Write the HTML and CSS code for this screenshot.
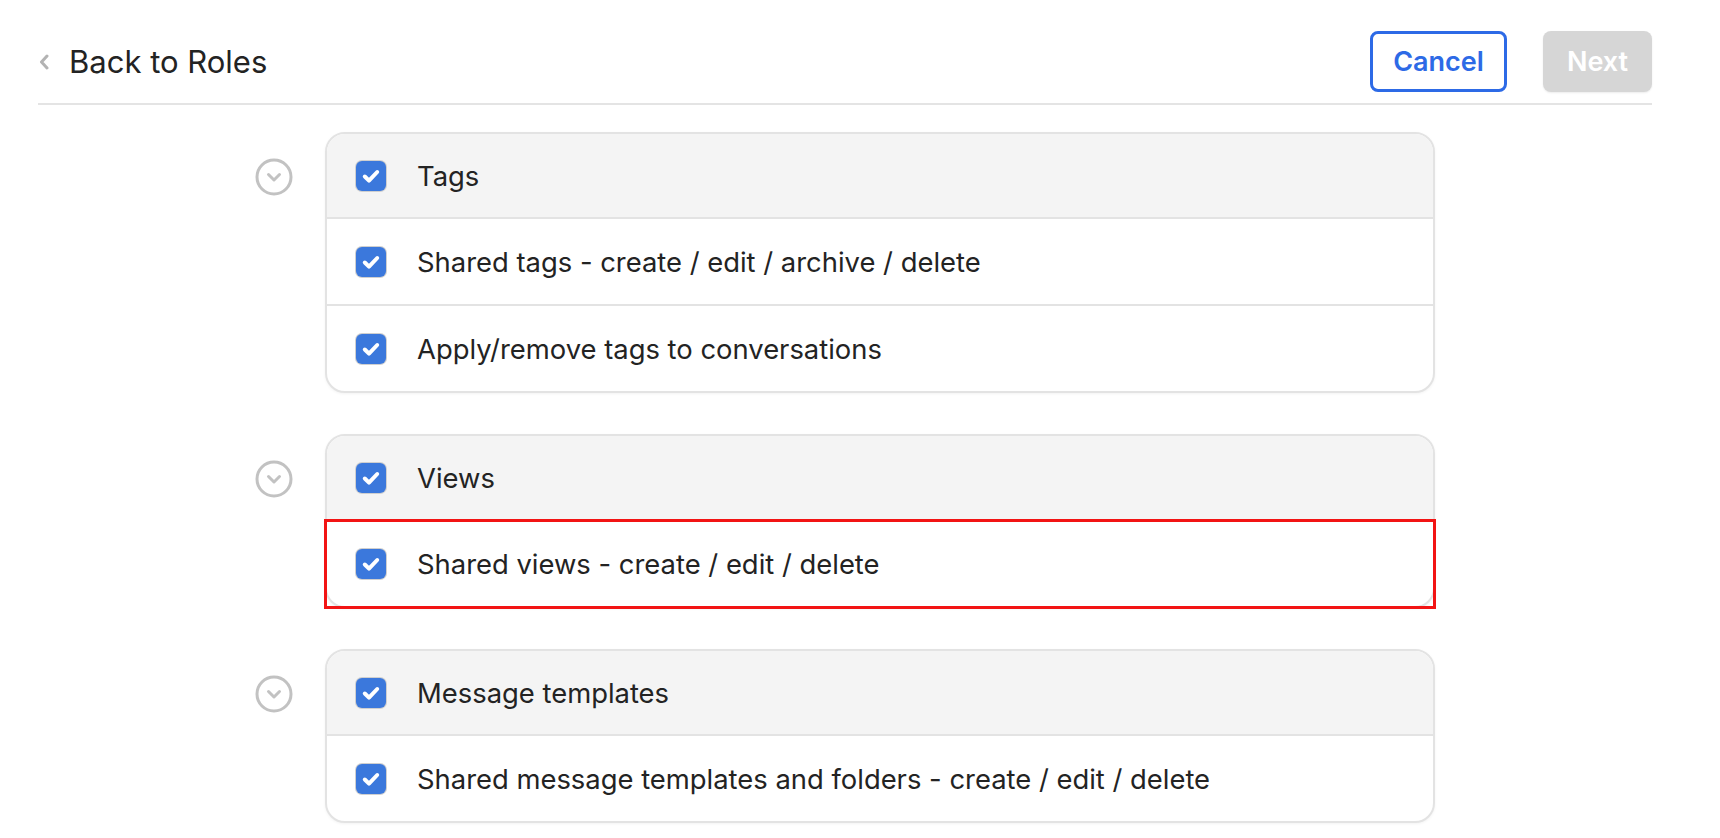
FILE: index.html
```html
<!DOCTYPE html>
<html>
<head>
<meta charset="utf-8">
<link rel="stylesheet" href="styles.css">
</head>
<body>
<header class="topbar">
  <a class="back">
    <svg class="back-icon" width="12" height="16" viewBox="0 0 12 16"><path d="M9 2 L3.5 8 L9 14" fill="none" stroke="#b3b3b3" stroke-width="3" stroke-linecap="round" stroke-linejoin="round"/></svg>
    <span class="back-text">Back to Roles</span>
  </a>
  <div class="actions">
    <button class="btn btn-cancel">Cancel</button>
    <button class="btn btn-next">Next</button>
  </div>
</header>
<main class="groups">
  <section class="group">
    <span class="toggle"><svg width="38" height="38" viewBox="0 0 38 38"><circle cx="19" cy="19" r="17" fill="none" stroke="#c2c2c2" stroke-width="3"/><path d="M13.5 16.5 L19 22 L24.5 16.5" fill="none" stroke="#c2c2c2" stroke-width="3" stroke-linecap="round" stroke-linejoin="round"/></svg></span>
    <div class="card">
      <div class="row head"><span class="cb"><svg viewBox="0 0 30 30"><path d="M8.8 15.5 L13 19.7 L21.2 11" fill="none" stroke="#fff" stroke-width="4" stroke-linecap="round" stroke-linejoin="round"/></svg></span><span class="label">Tags</span></div>
      <div class="row"><span class="cb"><svg viewBox="0 0 30 30"><path d="M8.8 15.5 L13 19.7 L21.2 11" fill="none" stroke="#fff" stroke-width="4" stroke-linecap="round" stroke-linejoin="round"/></svg></span><span class="label">Shared tags - create / edit / archive / delete</span></div>
      <div class="row last"><span class="cb"><svg viewBox="0 0 30 30"><path d="M8.8 15.5 L13 19.7 L21.2 11" fill="none" stroke="#fff" stroke-width="4" stroke-linecap="round" stroke-linejoin="round"/></svg></span><span class="label">Apply/remove tags to conversations</span></div>
    </div>
  </section>
  <section class="group">
    <span class="toggle"><svg width="38" height="38" viewBox="0 0 38 38"><circle cx="19" cy="19" r="17" fill="none" stroke="#c2c2c2" stroke-width="3"/><path d="M13.5 16.5 L19 22 L24.5 16.5" fill="none" stroke="#c2c2c2" stroke-width="3" stroke-linecap="round" stroke-linejoin="round"/></svg></span>
    <div class="card">
      <div class="row head"><span class="cb"><svg viewBox="0 0 30 30"><path d="M8.8 15.5 L13 19.7 L21.2 11" fill="none" stroke="#fff" stroke-width="4" stroke-linecap="round" stroke-linejoin="round"/></svg></span><span class="label">Views</span></div>
      <div class="row last highlighted"><span class="cb"><svg viewBox="0 0 30 30"><path d="M8.8 15.5 L13 19.7 L21.2 11" fill="none" stroke="#fff" stroke-width="4" stroke-linecap="round" stroke-linejoin="round"/></svg></span><span class="label">Shared views - create / edit / delete</span></div>
    </div>
  </section>
  <section class="group">
    <span class="toggle"><svg width="38" height="38" viewBox="0 0 38 38"><circle cx="19" cy="19" r="17" fill="none" stroke="#c2c2c2" stroke-width="3"/><path d="M13.5 16.5 L19 22 L24.5 16.5" fill="none" stroke="#c2c2c2" stroke-width="3" stroke-linecap="round" stroke-linejoin="round"/></svg></span>
    <div class="card">
      <div class="row head"><span class="cb"><svg viewBox="0 0 30 30"><path d="M8.8 15.5 L13 19.7 L21.2 11" fill="none" stroke="#fff" stroke-width="4" stroke-linecap="round" stroke-linejoin="round"/></svg></span><span class="label">Message templates</span></div>
      <div class="row last"><span class="cb"><svg viewBox="0 0 30 30"><path d="M8.8 15.5 L13 19.7 L21.2 11" fill="none" stroke="#fff" stroke-width="4" stroke-linecap="round" stroke-linejoin="round"/></svg></span><span class="label">Shared message templates and folders - create / edit / delete</span></div>
    </div>
  </section>
</main>
</body>
</html>
```
FILE: styles.css
```css
* { box-sizing: border-box; }
html, body { margin: 0; padding: 0; background: #fff; }
body {
  font-family: Inter, "Noto Sans", "Liberation Sans", sans-serif;
  color: #232323;
  width: 1720px;
  height: 838px;
  overflow: hidden;
}
.topbar {
  margin-left: 38px;
  width: 1614px;
  padding-top: 31px;
  padding-bottom: 11px;
  border-bottom: 2px solid #e4e4e4;
  display: flex;
  align-items: center;
  justify-content: space-between;
}
.back { display: flex; align-items: center; gap: 19px; }
.back-icon { display: block; }
.back-text { font-size: 31px; color: #232323; }
.actions { display: flex; gap: 36px; }
.btn {
  font-family: Inter, "Noto Sans", sans-serif;
  font-size: 27px;
  font-weight: 600;
  height: 61px;
  border-radius: 8px;
  padding: 0;
  cursor: pointer;
}
.btn-cancel {
  width: 137px;
  background: #fff;
  border: 3px solid #2d6ae6;
  color: #2d6ae6;
}
.btn-next {
  width: 109px;
  background: #d6d6d6;
  border: none;
  color: #fff;
  box-shadow: 0 1px 2px rgba(0,0,0,0.08);
}
.groups {
  padding-top: 27px;
  padding-left: 255px;
  display: flex;
  flex-direction: column;
  gap: 41px;
}
.group { display: flex; gap: 32px; align-items: flex-start; }
.toggle { display: block; width: 38px; height: 38px; margin-top: 26px; }
.toggle svg { display: block; }
.card {
  width: 1110px;
  border: 2px solid #e3e3e3;
  border-radius: 20px;
  box-shadow: 0 1px 3px rgba(0,0,0,0.05);
  background: #fff;
}
.row {
  display: flex;
  align-items: center;
  height: 87px;
  padding-left: 29px;
  border-top: 2px solid #e3e3e3;
  position: relative;
}
.row.head {
  height: 83px;
  border-top: none;
  background: #f4f4f4;
  border-radius: 18px 18px 0 0;
}
.row.last { border-radius: 0 0 18px 18px; }
.row.highlighted::after {
  content: "";
  position: absolute;
  left: -3px; right: -3px; bottom: -3px; top: -2px;
  border: 3px solid #f21414;
}
.cb {
  width: 30px;
  height: 30px;
  border-radius: 6px;
  background: #3b78dc;
  box-shadow: 0 0 0 1px #cfcfcf;
  flex: none;
}
.cb svg { display: block; width: 30px; height: 30px; }
.label { margin-left: 31px; font-size: 27.4px; color: #232323; }
```
